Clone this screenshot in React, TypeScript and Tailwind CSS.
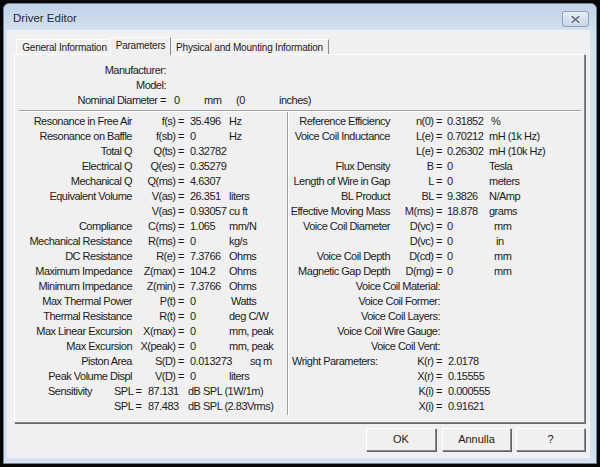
import React from "react";

type Param = {
  label?: string;
  sym?: string;
  value?: string;
  unit?: string;
  unitPad?: string;
};

const leftParams: Param[] = [
  { label: "Resonance in Free Air", sym: "f(s) =", value: "35.496", unit: "Hz" },
  { label: "Resonance on Baffle", sym: "f(sb) =", value: "0", unit: "Hz" },
  { label: "Total Q", sym: "Q(ts) =", value: "0.32782" },
  { label: "Electrical Q", sym: "Q(es) =", value: "0.35279" },
  { label: "Mechanical Q", sym: "Q(ms) =", value: "4.6307" },
  { label: "Equivalent Volume", sym: "V(as) =", value: "26.351", unit: "liters" },
  { sym: "V(as) =", value: "0.93057", unit: "cu ft" },
  { label: "Compliance", sym: "C(ms) =", value: "1.065", unit: "mm/N" },
  { label: "Mechanical Resistance", sym: "R(ms) =", value: "0", unit: "kg/s" },
  { label: "DC Resistance", sym: "R(e) =", value: "7.3766", unit: "Ohms" },
  { label: "Maximum Impedance", sym: "Z(max) =", value: "104.2", unit: "Ohms" },
  { label: "Minimum Impedance", sym: "Z(min) =", value: "7.3766", unit: "Ohms" },
  { label: "Max Thermal Power", sym: "P(t) =", value: "0", unit: "Watts", unitPad: "pl-[2px]" },
  { label: "Thermal Resistance", sym: "R(t) =", value: "0", unit: "deg C/W" },
  { label: "Max Linear Excursion", sym: "X(max) =", value: "0", unit: "mm, peak" },
  { label: "Max Excursion", sym: "X(peak) =", value: "0", unit: "mm, peak" },
  { label: "Piston Area", sym: "S(D) =", value: "0.013273", unit: "sq m", unitPad: "pl-[18px]" },
  { label: "Peak Volume Displ", sym: "V(D) =", value: "0", unit: "liters" },
];

const rightParams: Param[] = [
  { label: "Reference Efficiency", sym: "n(0) =", value: "0.31852", unit: "%", unitPad: "pl-[2px]" },
  { label: "Voice Coil Inductance", sym: "L(e) =", value: "0.70212", unit: "mH (1k Hz)" },
  { sym: "L(e) =", value: "0.26302", unit: "mH (10k Hz)" },
  { label: "Flux Density", sym: "B =", value: "0", unit: "Tesla" },
  { label: "Length of Wire in Gap", sym: "L =", value: "0", unit: "meters" },
  { label: "BL Product", sym: "BL =", value: "9.3826", unit: "N/Amp" },
  { label: "Effective Moving Mass", sym: "M(ms) =", value: "18.878", unit: "grams" },
  { label: "Voice Coil Diameter", sym: "D(vc) =", value: "0", unit: "mm", unitPad: "pl-[5px]" },
  { sym: "D(vc) =", value: "0", unit: "in", unitPad: "pl-[7px]" },
  { label: "Voice Coil Depth", sym: "D(cd) =", value: "0", unit: "mm", unitPad: "pl-[5px]" },
  { label: "Magnetic Gap Depth", sym: "D(mg) =", value: "0", unit: "mm", unitPad: "pl-[5px]" },
];

const coilFields = [
  "Voice Coil Material:",
  "Voice Coil Former:",
  "Voice Coil Layers:",
  "Voice Coil Wire Gauge:",
  "Voice Coil Vent:",
];

const wright = [
  { sym: "K(r) =", value: "2.0178" },
  { sym: "X(r) =", value: "0.15555" },
  { sym: "K(i) =", value: "0.000555" },
  { sym: "X(i) =", value: "0.91621" },
];

const rowCls = "flex h-[15px] items-center whitespace-nowrap";

function LeftRow({ p }: { p: Param }) {
  return (
    <div className={rowCls}>
      <span className="w-[117px] shrink-0 text-right">{p.label}</span>
      <span className="w-[52px] shrink-0 text-right">{p.sym}</span>
      <span className="ml-[6px] min-w-[39px] shrink-0">{p.value}</span>
      <span className={p.unitPad}>{p.unit}</span>
    </div>
  );
}

function RightRow({ p }: { p: Param }) {
  return (
    <div className={rowCls}>
      <span className="w-[101px] shrink-0 text-right">{p.label}</span>
      <span className="w-[52px] shrink-0 text-right">{p.sym}</span>
      <span className="ml-[5px] min-w-[42px] shrink-0">{p.value}</span>
      <span className={p.unitPad}>{p.unit}</span>
    </div>
  );
}

function DlgButton({ label, className }: { label: string; className: string }) {
  return (
    <button
      type="button"
      className={`h-[23px] border border-t-white border-l-white border-r-[#8a8a8a] border-b-[#8a8a8a] bg-[#f0f0f0] text-[11px] text-[#1b1b1b] shadow-[1px_1px_0_#5f5f5f] ${className}`}
    >
      {label}
    </button>
  );
}

export default function App() {
  return (
    <div className="h-[467px] w-[600px] overflow-hidden bg-[#070707] pl-[3px] pt-[3px] font-['Liberation_Sans',Arial,sans-serif]">
      <div className="flex h-[461px] w-[594px] flex-col rounded-t-[6px] border border-[#6f8297] bg-[#d5e3f1]">
        {/* title bar */}
        <div className="flex h-[27px] shrink-0 items-start justify-between rounded-t-[6px] bg-gradient-to-b from-[#c0d3e8] to-[#d3e1ef] pl-[9px] pr-[7px]">
          <span className="pt-[8px] text-[11.5px] leading-[13px] text-[#2b2b2b]">Driver Editor</span>
          <div className="mt-[7px] flex h-[16px] w-[27px] items-center justify-center rounded-[3px] border border-[#8fa2b8] bg-gradient-to-b from-[#e7eef6] to-[#c8d6e6]">
            <svg width="11" height="9" viewBox="0 0 11 9">
              <path d="M2 1.5 L9 7.5 M9 1.5 L2 7.5" stroke="#ffffff" strokeWidth="3.6" strokeLinecap="round" />
              <path d="M2 1.5 L9 7.5 M9 1.5 L2 7.5" stroke="#67778a" strokeWidth="1.8" strokeLinecap="round" />
            </svg>
          </div>
        </div>

        {/* client */}
        <div className="ml-[4px] flex h-[426px] w-[581px] flex-col bg-[#f0f0f0] pl-[6px] text-[11px] tracking-[-0.5px] text-[#1b1b1b] shadow-[0_0_0_1px_#eef4fa]">
          {/* tabs */}
          <div className="mt-[6px] flex h-[17px] items-end text-[10px] tracking-[-0.2px]">
            <div className="ml-[2px] flex h-[15px] w-[96px] items-center justify-center border-l border-t border-white shadow-[inset_-1px_0_0_#c8c8c8]">
              General Information
            </div>
            <div className="relative z-10 -mb-px -ml-[2px] flex h-[18px] w-[61px] items-center justify-center border-l border-t border-white border-r border-r-[#8a8a8a] bg-[#f0f0f0] pb-[2px]">
              Parameters
            </div>
            <div className="flex h-[15px] w-[158px] items-center justify-center border-r border-t border-r-[#8a8a8a] border-t-white">
              Physical and Mounting Information
            </div>
          </div>

          {/* panel */}
          <div className="flex h-[369px] w-[571px] flex-col border border-t-white border-l-white border-r-[#8a8a8a] border-b-[#8a8a8a] shadow-[1px_1px_0_#696969]">
            <div className="pt-[8px]">
              <div className={rowCls}>
                <span className="w-[151px] text-right">Manufacturer:</span>
              </div>
              <div className={rowCls}>
                <span className="w-[151px] text-right">Model:</span>
              </div>
              <div className={rowCls}>
                <span className="w-[151px] shrink-0 text-right">Nominal Diameter =</span>
                <span className="ml-[8px] w-[30px] shrink-0">0</span>
                <span className="w-[32px] shrink-0">mm</span>
                <span className="w-[43px] shrink-0">(0</span>
                <span>inches)</span>
              </div>
            </div>

            <div className="ml-[4px] mr-[3px] mt-[2px] h-[2px] border-b border-t border-b-white border-t-[#a0a0a0]" />

            <div className="flex">
              <div className="w-[272px] shrink-0 pt-[2px]">
                {leftParams.map((p, i) => (
                  <LeftRow key={i} p={p} />
                ))}
                <div className={rowCls}>
                  <span className="w-[99px] shrink-0 pl-[33px]">Sensitivity</span>
                  <span className="w-[34px] shrink-0">SPL =</span>
                  <span className="w-[40px] shrink-0">87.131</span>
                  <span>dB SPL (1W/1m)</span>
                </div>
                <div className={rowCls}>
                  <span className="w-[99px] shrink-0" />
                  <span className="w-[34px] shrink-0">SPL =</span>
                  <span className="w-[40px] shrink-0">87.483</span>
                  <span>dB SPL (2.83Vrms)</span>
                </div>
              </div>

              <div className="h-[303px] w-[2px] shrink-0 border-l border-r border-l-[#a0a0a0] border-r-white" />

              <div className="flex-1 pt-[2px]">
                {rightParams.map((p, i) => (
                  <RightRow key={i} p={p} />
                ))}
                {coilFields.map((f) => (
                  <div key={f} className={rowCls}>
                    <span className="w-[151px] shrink-0 text-right">{f}</span>
                  </div>
                ))}
                {wright.map((w, i) => (
                  <div key={w.sym} className={rowCls}>
                    <span className="w-[101px] shrink-0 pl-[3px]">{i === 0 ? "Wright Parameters:" : ""}</span>
                    <span className="w-[52px] shrink-0 text-right">{w.sym}</span>
                    <span className="ml-[6px]">{w.value}</span>
                  </div>
                ))}
              </div>
            </div>
          </div>

          {/* buttons */}
          <div className="mt-[5px] flex w-[571px] justify-end tracking-normal">
            <DlgButton label="OK" className="mr-[6px] w-[70px]" />
            <DlgButton label="Annulla" className="mr-[5px] w-[69px]" />
            <DlgButton label="?" className="w-[69px]" />
          </div>
        </div>
      </div>
    </div>
  );
}
